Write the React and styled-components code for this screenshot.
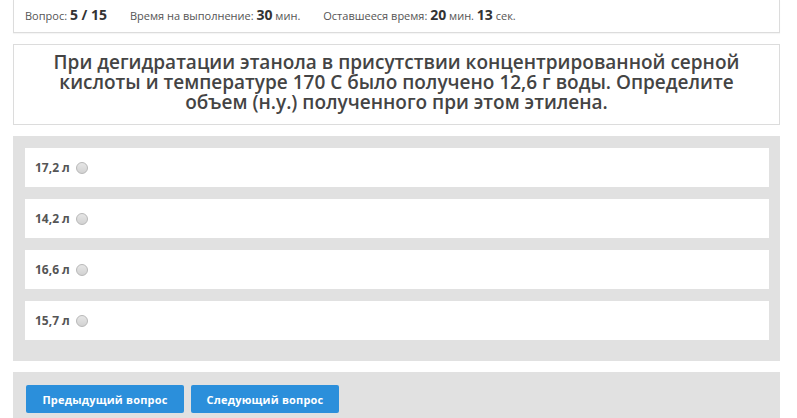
import React from "react";
import styled, { createGlobalStyle } from "styled-components";

const Global = createGlobalStyle`
  html, body { margin: 0; padding: 0; background: #fff; }
  body { font-family: "Open Sans", "DejaVu Sans", sans-serif; color: #555; }
`;

const Page = styled.div`
  width: 767px;
  margin-left: 13px;
  display: flex;
  flex-direction: column;
  gap: 11px;
`;

const InfoBar = styled.div`
  height: 29px;
  padding-bottom: 3px;
  border: 1px solid #dcdcdc;
  border-top: none;
  box-shadow: 0 1px 1px rgba(0,0,0,0.04);
  background: #fff;
  display: flex;
  align-items: center;
  padding-left: 11px;
  gap: 23px;
  font-size: 11px;
  color: #555;
`;

const InfoItem = styled.span`
  white-space: nowrap;
`;

const Num = styled.b`
  font-size: 14px;
  font-weight: 700;
  color: #333;
`;

const QuestionBox = styled.div`
  border: 1px solid #dcdcdc;
  background: #fff;
  height: 79px;
  box-sizing: border-box;
  height: 81px;
  padding-top: 7px;
  display: flex;
  justify-content: center;
`;

const QuestionText = styled.h1`
  margin: 0;
  width: 740px;
  text-align: center;
  font-size: 19px;
  line-height: 20px;
  font-weight: 600;
  color: #444;
`;

const Answers = styled.div`
  background: #e1e1e1;
  padding: 12px 11px 21px 12px;
  display: flex;
  flex-direction: column;
  gap: 12px;
`;

const AnswerRow = styled.label`
  height: 39px;
  background: #fff;
  display: flex;
  align-items: center;
  padding-left: 10px;
  gap: 6px;
  font-size: 12px;
  font-weight: 700;
  color: #555;
`;

const Radio = styled.span`
  width: 10px;
  height: 10px;
  border-radius: 50%;
  border: 1px solid #b8b8b8;
  background: linear-gradient(#e6e6e6, #d2d2d2);
  display: inline-block;
`;

const Footer = styled.div`
  background: #e1e1e1;
  padding: 13px;
  display: flex;
  gap: 7px;
`;

const Button = styled.button`
  height: 28px;
  width: ${(p) => p.w}px;
  border: none;
  border-radius: 2px;
  background: #2b8fdb;
  color: #fff;
  font-family: "Open Sans", "DejaVu Sans", sans-serif;
  font-size: 11px;
  letter-spacing: 0.2px;
  font-weight: 700;
  padding: 0;
  cursor: pointer;
`;

const answers = ["17,2 л", "14,2 л", "16,6 л", "15,7 л"];

export default function App() {
  return (
    <>
      <Global />
      <Page>
        <InfoBar>
          <InfoItem>
            Вопрос: <Num>5 / 15</Num>
          </InfoItem>
          <InfoItem>
            Время на выполнение: <Num>30</Num> мин.
          </InfoItem>
          <InfoItem>
            Оставшееся время: <Num>20</Num> мин. <Num>13</Num> сек.
          </InfoItem>
        </InfoBar>
        <QuestionBox>
          <QuestionText>
            При дегидратации этанола в присутствии концентрированной серной
            кислоты и температуре 170 С было получено 12,6 г воды. Определите
            объем (н.у.) полученного при этом этилена.
          </QuestionText>
        </QuestionBox>
        <Answers>
          {answers.map((a) => (
            <AnswerRow key={a}>
              {a} <Radio />
            </AnswerRow>
          ))}
        </Answers>
        <Footer>
          <Button w={158}>Предыдущий вопрос</Button>
          <Button w={148}>Следующий вопрос</Button>
        </Footer>
      </Page>
    </>
  );
}
